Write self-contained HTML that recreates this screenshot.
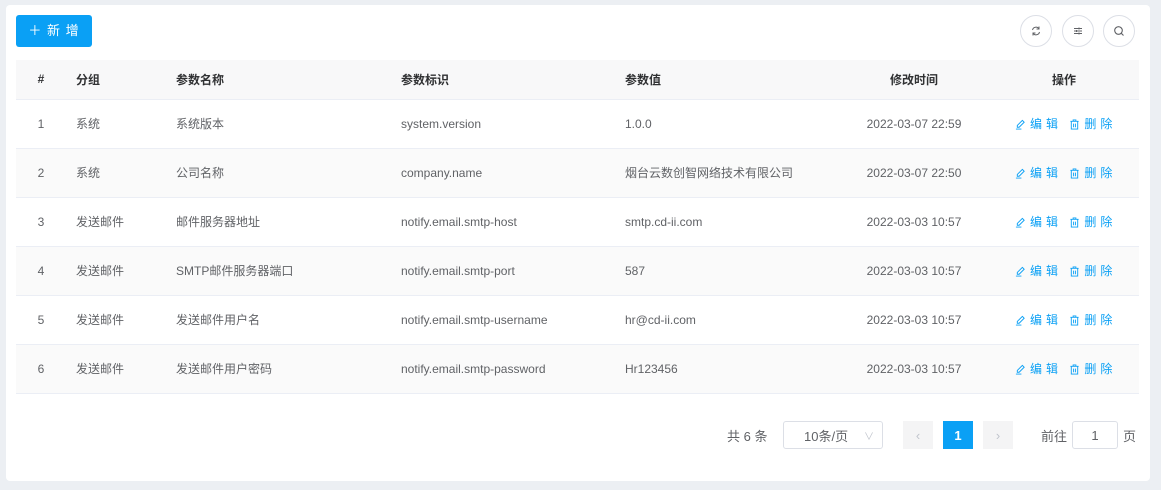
<!DOCTYPE html>
<html><head><meta charset="utf-8"><style>
*{box-sizing:border-box;margin:0;padding:0}
body{width:1161px;height:490px;background:#eceff3;font-family:"Liberation Sans","Noto Sans CJK SC",sans-serif;font-size:12px;color:#606266;position:relative;overflow:hidden}
.card{position:absolute;left:6px;top:5px;width:1144px;height:476px;background:#fff;border-radius:4px}
.btn{position:absolute;left:10px;top:10px;width:76px;height:32px;background:#0aa0f5;border-radius:3px;color:#fff;font-size:13px;line-height:32px;text-align:center;letter-spacing:1px}
.ib{position:absolute;top:10px;width:32px;height:32px;border:1px solid #dcdfe6;border-radius:50%;display:flex;align-items:center;justify-content:center}
table{position:absolute;left:10px;top:55px;width:1123px;border-collapse:collapse;table-layout:fixed}
td,th{height:49px;border-bottom:1px solid #ebeef5;text-align:left;font-weight:normal;white-space:nowrap;padding-left:10px}
th{height:39px;background:#f8f8f9;color:#303133;font-weight:bold}
tr.s td{background:#fafafa}
.c{text-align:center;padding-left:0}
.op{color:#0aa0f5;letter-spacing:4px;padding-left:2px}
.op svg{vertical-align:-2px;margin-right:4px}
.pg{position:absolute;top:421px;display:flex;align-items:center;justify-content:center;height:28px;font-size:13px}
</style></head><body>
<div class="card">
<div class="btn">＋ 新 增</div>
<div class="ib" style="left:1014px"><svg width="12" height="12" viewBox="0 0 12 12" fill="none" stroke="#606266" stroke-width="1"><path d="M2.5 5A3.5 3.5 0 0 1 9 4M9.5 7A3.5 3.5 0 0 1 3 8M9 1.5V4H6.5M3 10.5V8H5.5"/></svg></div>
<div class="ib" style="left:1056px"><svg width="12" height="12" viewBox="0 0 12 12" fill="none" stroke="#606266" stroke-width="1"><path d="M2 3.5h8M2 6h8M2 8.5h8M7 2.5v2M4.5 5v2M7 7.5v2"/></svg></div>
<div class="ib" style="left:1097px"><svg width="12" height="12" viewBox="0 0 12 12" fill="none" stroke="#606266" stroke-width="1.1"><circle cx="5.5" cy="5.5" r="3.8"/><path d="M8.3 8.3L10.5 10.5"/></svg></div>
<table>
<colgroup><col style="width:50px"><col style="width:100px"><col style="width:225px"><col style="width:224px"><col style="width:200px"><col style="width:198px"><col></colgroup>
<tr><th class="c">#</th><th>分组</th><th>参数名称</th><th>参数标识</th><th>参数值</th><th class="c">修改时间</th><th class="c" style="padding-right:24px">操作</th></tr>
<tr><td class="c">1</td><td>系统</td><td>系统版本</td><td>system.version</td><td>1.0.0</td><td class="c">2022-03-07 22:59</td><td class="op">EDIT</td></tr>
<tr class="s"><td class="c">2</td><td>系统</td><td>公司名称</td><td>company.name</td><td>烟台云数创智网络技术有限公司</td><td class="c">2022-03-07 22:50</td><td class="op">EDIT</td></tr>
<tr><td class="c">3</td><td>发送邮件</td><td>邮件服务器地址</td><td>notify.email.smtp-host</td><td>smtp.cd-ii.com</td><td class="c">2022-03-03 10:57</td><td class="op">EDIT</td></tr>
<tr class="s"><td class="c">4</td><td>发送邮件</td><td>SMTP邮件服务器端口</td><td>notify.email.smtp-port</td><td>587</td><td class="c">2022-03-03 10:57</td><td class="op">EDIT</td></tr>
<tr><td class="c">5</td><td>发送邮件</td><td>发送邮件用户名</td><td>notify.email.smtp-username</td><td>hr@cd-ii.com</td><td class="c">2022-03-03 10:57</td><td class="op">EDIT</td></tr>
<tr class="s"><td class="c">6</td><td>发送邮件</td><td>发送邮件用户密码</td><td>notify.email.smtp-password</td><td>Hr123456</td><td class="c">2022-03-03 10:57</td><td class="op">EDIT</td></tr>
</table>
</div>
<div class="pg" style="left:727px">共 6 条</div>
<div class="pg" style="left:783px;width:100px;border:1px solid #dcdfe6;border-radius:3px;justify-content:flex-start;padding-left:20px">10条/页<span style="position:absolute;right:8px;color:#c0c4cc;font-size:10px">∨</span></div>
<div class="pg" style="left:903px;width:30px;background:#f4f4f5;color:#c0c4cc">‹</div>
<div class="pg" style="left:943px;width:30px;background:#0aa0f5;color:#fff;font-weight:bold">1</div>
<div class="pg" style="left:983px;width:30px;background:#f4f4f5;color:#c0c4cc">›</div>
<div class="pg" style="left:1041px">前往</div>
<div class="pg" style="left:1072px;width:46px;border:1px solid #dcdfe6;border-radius:3px">1</div>
<div class="pg" style="left:1123px">页</div>
<script>
document.querySelectorAll('.op').forEach(function(e){e.innerHTML='<svg width="11" height="11" viewBox="0 0 12 12" fill="none" stroke="#0aa0f5" stroke-width="1"><path d="M8 1.5l2 2-5.5 5.5H2.5V7zM1 11h6"/></svg>编辑 <svg width="11" height="11" viewBox="0 0 12 12" fill="none" stroke="#0aa0f5" stroke-width="1"><path d="M1.5 2.5h9M4.5 2.5V1h3v1.5M2.5 2.5v8.5h7V2.5M5 5v4M7 5v4"/></svg>删除';});
</script>
</body></html>
